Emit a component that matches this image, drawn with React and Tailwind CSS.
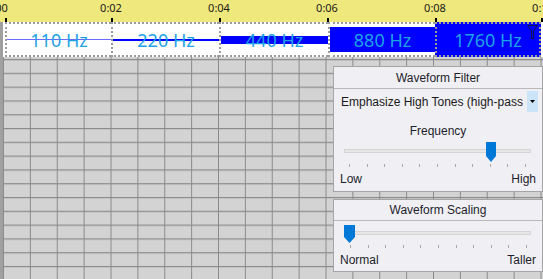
import React from "react";

const ticks = [
  { label: "0:00", x: -3 },
  { label: "0:02", x: 111 },
  { label: "0:04", x: 219 },
  { label: "0:06", x: 327 },
  { label: "0:08", x: 435 },
  { label: "0:10", x: 543 },
];

const segments = [
  { label: "110 Hz", w: "w-[106px]", bar: "h-px bg-[#6a6aff]", bg: "bg-white" },
  { label: "220 Hz", w: "w-[108px]", bar: "h-[2px] bg-[#0000ff]", bg: "bg-white" },
  { label: "440 Hz", w: "w-[109px]", bar: "h-[8px] bg-[#0000ff]", bg: "bg-white" },
  { label: "880 Hz", w: "w-[107px]", bar: "h-[25px] bg-[#0000ff]", bg: "bg-white" },
  { label: "1760 Hz", w: "w-[106px]", bar: "h-full bg-[#0000ff]", bg: "bg-[#0000ff]", last: true },
];

const Funnel = () => (
  <svg width="11" height="15" viewBox="0 0 11 15" className="absolute top-[1px] right-[1px]">
    <path d="M0.5 0.5 H10.5 L6.5 6 V13.5 H4.5 V6 Z" fill="none" stroke="#10104a" strokeWidth="1" />
  </svg>
);

const Thumb = ({ w = 10, h = 20, tip = 6 }) => (
  <svg width={w} height={h} viewBox={`0 0 ${w} ${h}`}>
    <path d={`M0 0 H${w} V${h - tip} L${w / 2} ${h} L0 ${h - tip} Z`} fill="#0078d7" />
  </svg>
);

const Slider = ({ thumbLeft, thumbW, thumbH, trackTop, tickLeft }) => (
  <div>
    <div className="relative" style={{ height: thumbH }}>
      <div
        className="absolute left-[10px] w-[187px] h-[4px] bg-[#e7e7e7] border border-[#d4d4d4]"
        style={{ top: trackTop }}
      />
      <div className="absolute top-0" style={{ left: thumbLeft }}>
        <Thumb w={thumbW} h={thumbH} tip={6} />
      </div>
    </div>
    <div className="flex justify-between w-[177px] h-[3px] mt-[2px]" style={{ marginLeft: tickLeft }}>
      {Array.from({ length: 11 }).map((_, i) => (
        <div key={i} className="w-px h-[3px] bg-[#a8a8a8]" />
      ))}
    </div>
  </div>
);

export default function App() {
  return (
    <div className="w-[543px] h-[279px] overflow-hidden flex flex-col bg-[#d3d3d3] font-['Noto_Sans',sans-serif] text-[#1d1d2c]">
      {/* ruler */}
      <div className="relative h-[22px] shrink-0 bg-[#efe87c]">
        {ticks.map((t) => (
          <span
            key={t.label}
            className="absolute top-[0px] -translate-x-1/2 text-[11px] leading-[15px] text-[#1a1a1a]"
            style={{ left: t.x }}
          >
            {t.label}
          </span>
        ))}
        {[5, 111, 219, 327, 435, 541].map((x) => (
          <div key={x} className="absolute bottom-0 w-[2px] h-[4px] bg-black" style={{ left: x }} />
        ))}
      </div>

      {/* segments */}
      <div className="flex h-[35px] shrink-0 bg-white border-l-[3px] border-[#a0a0a0] pl-[2px]">
        {segments.map((s) => (
          <div
            key={s.label}
            className={`relative grid items-center border-y-2 border-l-2 border-dotted border-[#9c9c9c] ${s.w} ${s.bg} ${s.last ? "border-r-2" : ""}`}
          >
            <div className={`col-start-1 row-start-1 w-full ${s.bar}`} />
            <span className="col-start-1 row-start-1 justify-self-center text-[18px] leading-none text-[#1ea2e6]">
              {s.label}
            </span>
            {s.last && <Funnel />}
          </div>
        ))}
      </div>

      {/* grid + panels */}
      <div className="flex-1 flex flex-col items-end gap-[7px] pt-[9px] border-l-[3px] border-[#a0a0a0] bg-[linear-gradient(90deg,#8b8b8b_0_1px,transparent_1px),linear-gradient(180deg,#8b8b8b_0_1px,#c2c2c2_1px_2px,transparent_2px)] bg-size-[26.875px_13.8px] bg-position-[0px_2px]">
        <div className="w-[210px] border border-[#a5a5a5] bg-[#f0f0f4] text-[12px] font-['Liberation_Sans',sans-serif]">
          <div className="h-[22px] flex items-center justify-center border-b border-[#b8b8b8]">
            Waveform Filter
          </div>
          <div className="flex items-center h-[21px] mt-[2px] pl-[7px] pr-[4px]">
            <span className="flex-1 whitespace-nowrap overflow-hidden text-[#1a1a1a]">
              Emphasize High Tones (high-pass
            </span>
            <div className="w-[11px] h-[21px] bg-[#cce4f7] flex items-center justify-center">
              <svg width="5" height="3" viewBox="0 0 5 3">
                <path d="M0 0 H5 L2.5 3 Z" fill="#000" />
              </svg>
            </div>
          </div>
          <div className="mt-[11px] h-[16px] leading-[16px] text-center">Frequency</div>
          <div className="mt-[3px]">
            <Slider thumbLeft={152} thumbW={10} thumbH={20} trackTop={7} tickLeft={15} />
          </div>
          <div className="flex justify-between px-[6px] mt-[4px] h-[16px] leading-[16px] mb-[4px]">
            <span>Low</span>
            <span>High</span>
          </div>
        </div>

        <div className="w-[210px] border border-[#a5a5a5] bg-[#f0f0f4] text-[12px] font-['Liberation_Sans',sans-serif]">
          <div className="h-[21px] flex items-center justify-center border-b border-[#b8b8b8]">
            Waveform Scaling
          </div>
          <div className="mt-[4px]">
            <Slider thumbLeft={10} thumbW={11} thumbH={18} trackTop={6} tickLeft={16} />
          </div>
          <div className="flex justify-between px-[6px] mt-[4px] h-[16px] leading-[16px] mb-[3px]">
            <span>Normal</span>
            <span>Taller</span>
          </div>
        </div>
      </div>
    </div>
  );
}
